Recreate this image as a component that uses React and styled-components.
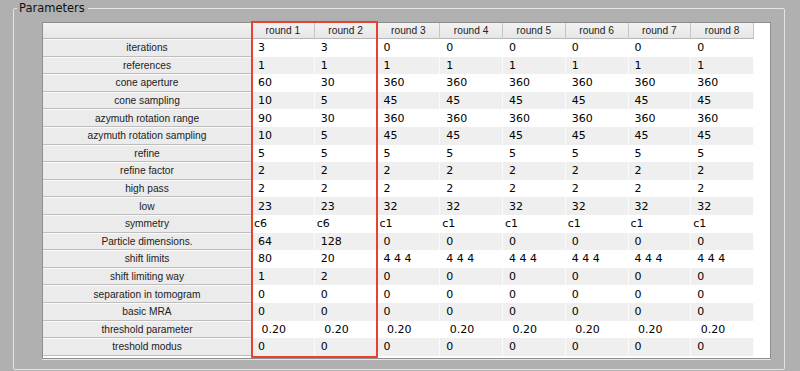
import React from "react";
import styled, { createGlobalStyle } from "styled-components";

const GlobalStyle = createGlobalStyle`
  html, body {
    margin: 0;
    padding: 0;
    background: #b0b0b0;
  }
  body {
    width: 800px;
    height: 371px;
    overflow: hidden;
    font-family: "DejaVu Sans", "Liberation Sans", sans-serif;
  }
`;

const Frame = styled.fieldset`
  box-sizing: border-box;
  width: 772px;
  height: 370px;
  margin: 0 0 0 13px;
  padding: 6px 12px 11px 28px;
  border: 1px solid #e4e4e4;
  border-radius: 2px;
  min-width: 0;
`;

const Legend = styled.legend`
  padding: 0 3px 0 2px;
  margin-left: -25px;
  font-family: "DejaVu Sans", sans-serif;
  font-size: 11.5px;
  line-height: 16px;
  color: #111;
`;

const Pane = styled.div`
  position: relative;
  box-sizing: border-box;
  width: 729px;
  height: 337px;
  background: #fff;
  border: 1px solid #8e8e8e;
  box-shadow: 0 1px 0 #e6e6e6;
`;

const Grid = styled.div`
  display: grid;
  grid-template-columns: 209px repeat(8, 62.75px);
  grid-template-rows: 16px repeat(18, 17.6px);
`;

const HeadCell = styled.div`
  box-sizing: border-box;
  display: flex;
  align-items: center;
  justify-content: center;
  background: linear-gradient(#f2f2f2, #e6e6e6);
  border-right: 1px solid #c6c6c6;
  border-bottom: 1px solid #b8b8b8;
  font-family: "Liberation Sans", sans-serif;
  font-size: 10.2px;
  color: #222;
`;

const LabelCell = styled.div`
  box-sizing: border-box;
  display: flex;
  align-items: center;
  justify-content: center;
  background: #ebebeb;
  border-top: 1px solid #fafafa;
  border-bottom: 1px solid #bdbdbd;
  border-right: 1px solid #bdbdbd;
  font-family: "Liberation Sans", sans-serif;
  font-size: 10.2px;
  color: #222;
`;

const ValueCell = styled.div`
  box-sizing: border-box;
  display: flex;
  align-items: center;
  padding-left: ${(p) => (p.$tight ? "2px" : "6px")};
  background: ${(p) => (p.$odd ? "#efefef" : "#fff")};
  border-right: 1px solid ${(p) => (p.$odd ? "#fbfbfb" : "#fff")};
  font-size: 11px;
  color: #000;
  white-space: pre;
`;

const Highlight = styled.div`
  position: absolute;
  left: 208px;
  top: -2px;
  width: 127px;
  height: 337px;
  box-sizing: border-box;
  border: 2px solid #e5432d;
  pointer-events: none;
`;

const rounds = [1, 2, 3, 4, 5, 6, 7, 8];

const fill = (first, second, rest) => [first, second, ...Array(6).fill(rest)];

const rows = [
  ["iterations", fill("3", "3", "0")],
  ["references", fill("1", "1", "1")],
  ["cone aperture", fill("60", "30", "360")],
  ["cone sampling", fill("10", "5", "45")],
  ["azymuth rotation range", fill("90", "30", "360")],
  ["azymuth rotation sampling", fill("10", "5", "45")],
  ["refine", fill("5", "5", "5")],
  ["refine factor", fill("2", "2", "2")],
  ["high pass", fill("2", "2", "2")],
  ["low", fill("23", "23", "32")],
  ["symmetry", fill("c6", "c6", "c1"), true],
  ["Particle dimensions.", fill("64", "128", "0")],
  ["shift limits", fill("80", "20", "4 4 4")],
  ["shift limiting way", fill("1", "2", "0")],
  ["separation in tomogram", fill("0", "0", "0")],
  ["basic MRA", fill("0", "0", "0")],
  ["threshold parameter", fill(" 0.20", " 0.20", " 0.20")],
  ["treshold modus", fill("0", "0", "0")],
];

export default function App() {
  return (
    <>
      <GlobalStyle />
      <Frame>
        <Legend>Parameters</Legend>
        <Pane>
          <Grid>
            <HeadCell />
            {rounds.map((r) => (
              <HeadCell key={r}>round {r}</HeadCell>
            ))}
            {rows.map(([label, values, tight], i) => (
              <React.Fragment key={label}>
                <LabelCell>{label}</LabelCell>
                {values.map((v, j) => (
                  <ValueCell key={j} $odd={i % 2 === 1} $tight={tight}>
                    {v}
                  </ValueCell>
                ))}
              </React.Fragment>
            ))}
          </Grid>
          <Highlight />
        </Pane>
      </Frame>
    </>
  );
}
